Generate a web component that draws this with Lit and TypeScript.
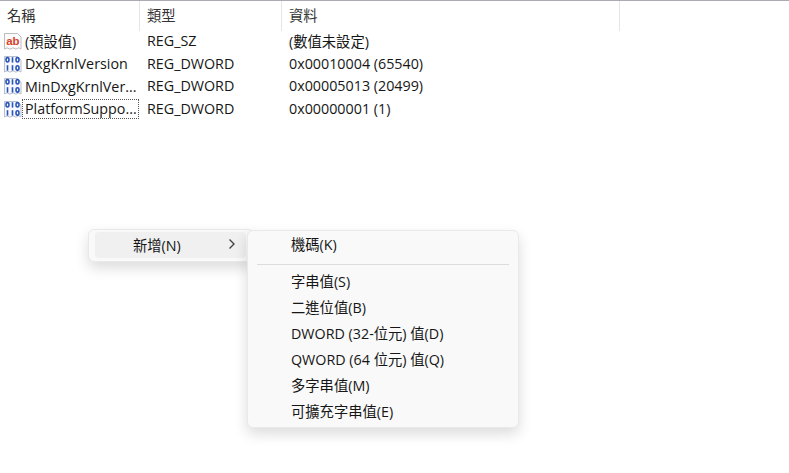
import { LitElement, html, css, svg } from "lit";
import { customElement } from "lit/decorators.js";

const frame = (fill: string, stroke: string) => svg`<path d="M1.5 1.5H14.5L18 5V17L15.5 15.8L13 17.2L10 15.8L7 17.2L4 15.8L1.5 17Z" fill="${fill}" stroke="${stroke}" stroke-width="1"/>`;

const abIcon = svg`<svg class="icon" width="19" height="19" viewBox="0 0 19 19">
  ${frame("#fbfbfb", "#bdbdbd")}
  <text x="3.2" y="13" font-family="'Liberation Sans',sans-serif" font-size="11.5" font-weight="700" fill="#d8432b">ab</text>
</svg>`;

const binIcon = svg`<svg class="icon" width="19" height="19" viewBox="0 0 19 19">
  ${frame("#f6f8fd", "#b8bfce")}
  <g fill="none" stroke="#2b55b8" stroke-width="1.6">
    <ellipse cx="4.5" cy="4.8" rx="1.5" ry="2.2"/>
    <path d="M9.5 2.2V7.6"/>
    <ellipse cx="14.5" cy="4.8" rx="1.5" ry="2.2"/>
    <path d="M4.5 10.2V15.6"/>
    <path d="M9.5 10.2V15.6"/>
    <ellipse cx="14.5" cy="12.9" rx="1.5" ry="2.2"/>
  </g>
</svg>`;

const rows = [
  { icon: abIcon, name: "(預設值)", type: "REG_SZ", data: "(數值未設定)", focus: false },
  { icon: binIcon, name: "DxgKrnlVersion", type: "REG_DWORD", data: "0x00010004 (65540)", focus: false },
  { icon: binIcon, name: "MinDxgKrnlVer...", type: "REG_DWORD", data: "0x00005013 (20499)", focus: false },
  { icon: binIcon, name: "PlatformSuppo...", type: "REG_DWORD", data: "0x00000001 (1)", focus: true },
];

const items = ["字串值(S)", "二進位值(B)", "DWORD (32-位元) 值(D)", "QWORD (64 位元) 值(Q)", "多字串值(M)", "可擴充字串值(E)"];

@customElement("app-root")
export class AppRoot extends LitElement {
  static styles = css`
    :host {
      display: block;
      position: relative;
      width: 789px;
      height: 473px;
      overflow: hidden;
      background: #fff;
      color: #161616;
      font-family: "Open Sans", "Noto Sans CJK TC", sans-serif;
      font-size: 14.3px;
    }
    .list { border-top: 1px solid #a9abb0; display: flex; flex-direction: column; }
    .head { display: grid; grid-template-columns: 140px 142px 338px; height: 29px; width: 620px; }
    .hcell {
      border-right: 1px solid #e5e5e5;
      height: 30px;
      padding-left: 7px;
      line-height: 30px;
      color: #333;
    }
    .rows { display: flex; flex-direction: column; }
    .row { display: grid; grid-template-columns: 147px 142px 1fr; height: 22.7px; align-items: center; white-space: nowrap; }
    .cell { padding-bottom: 2px; }
    .name { display: flex; align-items: center; padding: 0 8px 0 3px; min-width: 0; }
    .icon { flex: none; }
    .label { flex: 1; padding: 0 1px 0 2px; line-height: 18px; border: 1px dotted transparent; margin-left: 0; }
    .label.focus { border-color: #555; }
    .menu {
      position: absolute;
      box-sizing: border-box;
      background: #f9f9f9;
      border: 1px solid #e9e9e9;
      border-radius: 6px;
      box-shadow: 0 6px 14px rgba(0, 0, 0, 0.14);
    }
    .parent {
      left: 88px;
      top: 229px;
      width: 166px;
      height: 33px;
      padding: 2px 8px 2px 6px;
    }
    .new {
      display: flex;
      align-items: center;
      justify-content: space-between;
      height: 26px;
      width: 151px;
      box-sizing: border-box;
      padding: 0 10px 2px 38px;
      background: #f0f0f0;
      border-radius: 4px;
    }
    .sub {
      left: 247px;
      top: 230px;
      width: 272px;
      height: 198px;
      padding-top: 1px;
      display: flex;
      flex-direction: column;
    }
    .item { height: 26px; line-height: 26px; padding-left: 43px; white-space: nowrap; }
    .sep { height: 1px; background: #dcdcdc; margin: 6px 9px 4px; }
  `;

  render() {
    return html`
      <div class="list">
        <div class="head">
          <div class="hcell">名稱</div>
          <div class="hcell">類型</div>
          <div class="hcell">資料</div>
        </div>
        <div class="rows">
          ${rows.map(
            (r) => html`<div class="row">
              <div class="name">${r.icon}<span class="label ${r.focus ? "focus" : ""}">${r.name}</span></div>
              <div class="cell">${r.type}</div>
              <div class="cell">${r.data}</div>
            </div>`
          )}
        </div>
      </div>
      <div class="menu parent">
        <div class="new">
          <span>新增(N)</span>
          <svg width="9" height="12" viewBox="0 0 9 12"><path d="M2.5 1.5L7 6L2.5 10.5" fill="none" stroke="#444" stroke-width="1.4"/></svg>
        </div>
      </div>
      <div class="menu sub">
        <div class="item">機碼(K)</div>
        <div class="sep"></div>
        ${items.map((i) => html`<div class="item">${i}</div>`)}
      </div>
    `;
  }
}
